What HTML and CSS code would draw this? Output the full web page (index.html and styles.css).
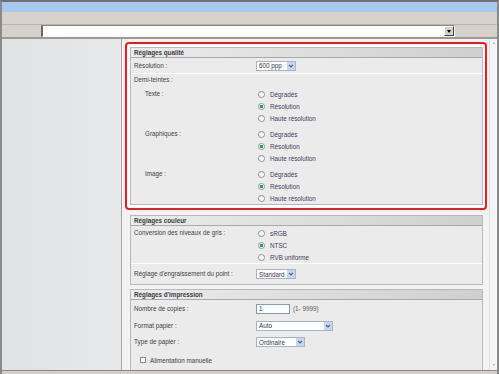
FILE: index.html
```html
<!DOCTYPE html>
<html lang="fr">
<head>
<meta charset="utf-8">
<title>Réglages</title>
<link rel="stylesheet" href="styles.css">
</head>
<body>
<div class="window">
  <div class="titlebar"></div>
  <div class="menubar"></div>
  <div class="toolbar">
    <div class="combo"><span class="combo-btn"><span class="tri"></span></span></div>
  </div>
  <div class="main">
    <div class="sidebar"></div>
    <div class="content">
      <div class="pane">
        <div class="highlight">
          <section class="section">
            <div class="section-head">Réglages qualité</div>
            <div class="row sep r16">
              <span class="label">Résolution :</span>
              <span class="select w40">600 ppp<i class="arrow"><svg width="8" height="8" viewBox="0 0 8 8"><path d="M2 3 L4 5 L6 3" stroke="#4d6185" fill="none" stroke-width="1.2"/></svg></i></span>
            </div>
            <div class="row r12"><span class="label">Demi-teintes :</span></div>
            <div class="group g1">
              <span class="label sub">Texte :</span>
              <div class="radios">
                <label class="radio"><i></i>Dégradés</label>
                <label class="radio"><i class="on"></i>Résolution</label>
                <label class="radio"><i></i>Haute résolution</label>
              </div>
            </div>
            <div class="group g2">
              <span class="label sub">Graphiques :</span>
              <div class="radios">
                <label class="radio"><i></i>Dégradés</label>
                <label class="radio"><i class="on"></i>Résolution</label>
                <label class="radio"><i></i>Haute résolution</label>
              </div>
            </div>
            <div class="group g2">
              <span class="label sub">Image :</span>
              <div class="radios">
                <label class="radio"><i></i>Dégradés</label>
                <label class="radio"><i class="on"></i>Résolution</label>
                <label class="radio"><i></i>Haute résolution</label>
              </div>
            </div>
          </section>
        </div>

        <section class="section outer s2">
          <div class="section-head">Réglages couleur</div>
          <div class="group sep g3">
            <span class="label">Conversion des niveaux de gris :</span>
            <div class="radios">
              <label class="radio"><i></i>sRGB</label>
              <label class="radio"><i class="on"></i>NTSC</label>
              <label class="radio"><i></i>RVB uniforme</label>
            </div>
          </div>
          <div class="row r20">
            <span class="label">Réglage d'engraissement du point :</span>
            <span class="select w40">Standard<i class="arrow"><svg width="8" height="8" viewBox="0 0 8 8"><path d="M2 3 L4 5 L6 3" stroke="#4d6185" fill="none" stroke-width="1.2"/></svg></i></span>
          </div>
        </section>

        <section class="section outer s3">
          <div class="section-head">Réglages d'impression</div>
          <div class="row r17">
            <span class="label">Nombre de copies :</span>
            <span class="ctl"><span class="input">1</span><span class="hint">(1- 9999)</span></span>
          </div>
          <div class="row r17">
            <span class="label">Format papier :</span>
            <span class="select w76">Auto<i class="arrow"><svg width="8" height="8" viewBox="0 0 8 8"><path d="M2 3 L4 5 L6 3" stroke="#4d6185" fill="none" stroke-width="1.2"/></svg></i></span>
          </div>
          <div class="row r16">
            <span class="label">Type de papier :</span>
            <span class="select w48">Ordinaire<i class="arrow"><svg width="8" height="8" viewBox="0 0 8 8"><path d="M2 3 L4 5 L6 3" stroke="#4d6185" fill="none" stroke-width="1.2"/></svg></i></span>
          </div>
          <div class="check-row">
            <label class="check"><i></i>Alimentation manuelle</label>
          </div>
        </section>
      </div>
      <div class="scrollbar"><span class="sb-up"></span><span class="sb-down"></span></div>
    </div>
  </div>
</div>
</body>
</html>
```

FILE: styles.css
```css
html, body {
  margin: 0;
  padding: 0;
}
body {
  width: 499px;
  height: 374px;
  overflow: hidden;
  background: #d4d0c8;
  font-family: "Liberation Sans", Arial, sans-serif;
  font-size: 6.3px;
  color: #404048;
}
.window {
  box-sizing: border-box;
  height: 374px;
  border-left: 2px solid #8a8a8a;
  border-right: 2px solid #8a8a8a;
  border-top: 2px solid #707070;
  display: flex;
  flex-direction: column;
}
.titlebar {
  height: 10px;
  background: #a8c9ef;
}
.menubar {
  height: 12px;
  background: #d6d2ca;
  border-bottom: 1px solid #b9b5ad;
}
.toolbar {
  height: 12px;
  background: #d6d2ca;
  border-bottom: 2px solid #9a9a9a;
  display: flex;
  align-items: flex-start;
}
.combo {
  box-sizing: border-box;
  margin-left: 39px;
  width: 414px;
  height: 12px;
  background: #fff;
  border-left: 2px solid #6a6a6a;
  border-top: 1px solid #8a8a8a;
  border-right: 1px solid #f4f4f4;
  border-bottom: 1px solid #f4f4f4;
  display: flex;
  justify-content: flex-end;
  align-items: center;
  padding-right: 0;
}
.combo-btn {
  box-sizing: border-box;
  width: 10px;
  height: 10px;
  background: #d4d0c8;
  border: 1px solid;
  border-color: #ffffff #404040 #404040 #ffffff;
  display: flex;
  align-items: center;
  justify-content: center;
}
.tri {
  width: 0;
  height: 0;
  border-left: 2.5px solid transparent;
  border-right: 2.5px solid transparent;
  border-top: 3px solid #000;
}
.main {
  height: 331px;
  border-bottom: 1px solid #8a8a8a;
  display: flex;
  overflow: hidden;
}
.sidebar {
  width: 119px;
  background: linear-gradient(to right, #e0e2e4, #e7e8e9);
  border-right: 1px solid #a8a8a8;
}
.content {
  flex: 1;
  display: flex;
  background: #f3f3f3;
  overflow: hidden;
}
.pane {
  width: 367px;
  padding-top: 3px;
  box-sizing: border-box;
}
.scrollbar {
  flex: 1;
  background: #f4f4f4;
  border-left: 1px solid #e2e2e2;
  display: flex;
  flex-direction: column;
  justify-content: space-between;
  align-items: center;
  padding: 3px 0 4px;
}
.sb-up, .sb-down {
  width: 0;
  height: 0;
  border-left: 1.5px solid transparent;
  border-right: 1.5px solid transparent;
}
.sb-up { border-bottom: 2px solid #a0a0a0; }
.sb-down { border-top: 2px solid #a0a0a0; }

.highlight {
  margin: 0 2px 0 3px;
  border: 2px solid #ec1c24;
  border-radius: 4px;
  background: #fff;
  padding: 3px 2px 3px 3px;
}
.section {
  border: 1px solid #b8b8b8;
  background: #ebebeb;
}
.section.outer {
  margin: 0 6px 0 8px;
}
.s2 { margin-top: 5px !important; }
.s3 { margin-top: 4px !important; }
.section-head {
  height: 9px;
  line-height: 9px;
  padding-left: 3px;
  font-weight: bold;
  color: #3a3a42;
  background: linear-gradient(to right, #ececec, #cfcfcf);
  border-bottom: 1px solid #a9a9a9;
}
.row {
  display: grid;
  grid-template-columns: 122px auto;
  align-items: center;
  padding-left: 3px;
}
.r12 { height: 12px; }
.r16 { height: 16px; }
.r17 { height: 17px; }
.r20 { height: 20px; }
.sep { border-bottom: 1px solid #ffffff; }
.row.sep.r16 { height: 15px; }

.group {
  display: grid;
  grid-template-columns: 122px auto;
  align-items: start;
  padding-left: 3px;
}
.g1 { margin-top: 2px; }
.g2 { margin-top: 4px; }
.g3 { padding-top: 1px; }
.label {
  line-height: 12px;
  color: #404048;
  white-space: nowrap;
}
.sub { padding-left: 11px; }
.radios {
  display: flex;
  flex-direction: column;
}
.radio {
  display: flex;
  align-items: center;
  height: 12px;
  color: #453c5c;
  white-space: nowrap;
}
.radio i {
  box-sizing: border-box;
  width: 7px;
  height: 7px;
  margin-left: 2px;
  margin-right: 5px;
  border: 1px solid #8795a6;
  border-radius: 50%;
  background: radial-gradient(circle, #ffffff 0 55%, #e4e8ee 100%);
}
.radio i.on {
  background: radial-gradient(circle, #2e9a36 0 1.4px, #ffffff 1.8px);
}
.select {
  box-sizing: border-box;
  display: inline-flex;
  align-items: center;
  height: 10px;
  padding-left: 2px;
  border: 1px solid #a9b4c4;
  background: #fff;
  color: #383848;
  white-space: nowrap;
}
.w40 { width: 40px; }
.w48 { width: 49px; }
.w76 { width: 77px; }
.arrow {
  margin-left: auto;
  width: 8px;
  height: 8px;
  background: #c8d6f0;
  display: flex;
}
.ctl {
  display: flex;
  align-items: center;
}
.input {
  box-sizing: border-box;
  width: 34px;
  height: 10px;
  line-height: 8px;
  padding-left: 2px;
  border: 1px solid #7f9db9;
  background: #fff;
  color: #383848;
}
.hint {
  margin-left: 3px;
  color: #585860;
}
.check-row {
  height: 20px;
  display: flex;
  align-items: center;
  padding-left: 9px;
}
.check {
  display: flex;
  align-items: center;
  color: #404048;
}
.check i {
  box-sizing: border-box;
  width: 6px;
  height: 6px;
  margin-right: 4px;
  border: 1px solid #7c8ca2;
  background: #fff;
}
```
